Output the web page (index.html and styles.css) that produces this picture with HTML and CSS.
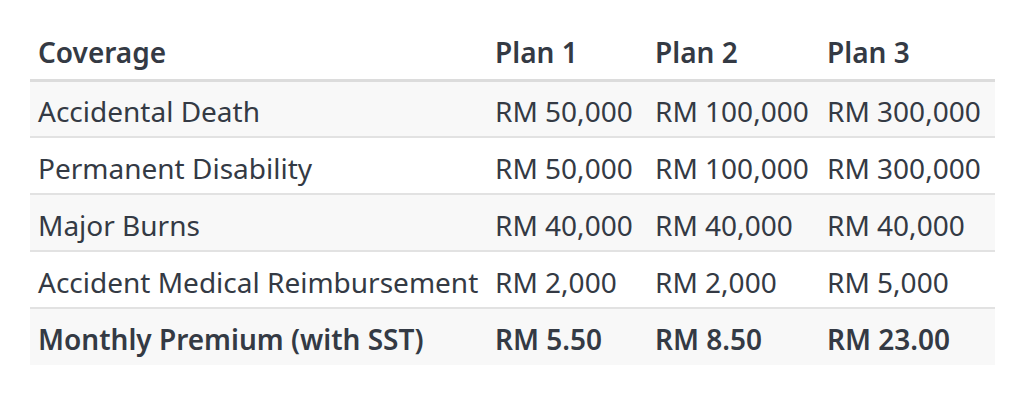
FILE: index.html
```html
<!DOCTYPE html>
<html>
<head>
<meta charset="utf-8">
<link rel="stylesheet" href="styles.css">
</head>
<body>
<div class="wrap">
<table class="plans">
  <colgroup>
    <col class="c1"><col class="c2"><col class="c3"><col class="c4">
  </colgroup>
  <thead>
    <tr><th>Coverage</th><th>Plan 1</th><th>Plan 2</th><th>Plan 3</th></tr>
  </thead>
  <tbody>
    <tr><td>Accidental Death</td><td>RM 50,000</td><td>RM 100,000</td><td>RM 300,000</td></tr>
    <tr><td>Permanent Disability</td><td>RM 50,000</td><td>RM 100,000</td><td>RM 300,000</td></tr>
    <tr><td>Major Burns</td><td>RM 40,000</td><td>RM 40,000</td><td>RM 40,000</td></tr>
    <tr><td>Accident Medical Reimbursement</td><td>RM 2,000</td><td>RM 2,000</td><td>RM 5,000</td></tr>
    <tr class="total"><td>Monthly Premium (with SST)</td><td>RM 5.50</td><td>RM 8.50</td><td>RM 23.00</td></tr>
  </tbody>
</table>
</div>
</body>
</html>
```
FILE: styles.css
```css
html, body { margin: 0; padding: 0; background: #fff; }
.wrap { padding: 22px 30px; }
.plans {
  border-collapse: collapse;
  table-layout: fixed;
  width: 965px;
  font-family: "Noto Sans", sans-serif;
  font-size: 28px;
  color: #343a44;
}
.c1 { width: 457px; }
.c2 { width: 160px; }
.c3 { width: 172px; }
.c4 { width: 176px; }
.plans th, .plans td {
  text-align: left;
  padding: 6px 8px 0;
  white-space: nowrap;
  line-height: 1.2;
  box-sizing: border-box;
}
.plans th {
  font-weight: 600;
  height: 58px;
  border-bottom: 3px solid #dcdcdc;
}
.plans td {
  height: 57px;
  border-bottom: 2px solid #e2e2e2;
}
.plans tbody tr:nth-child(odd) { background: #f8f8f8; }
.plans tr.total td { font-weight: 600; border-bottom: none; }
```
